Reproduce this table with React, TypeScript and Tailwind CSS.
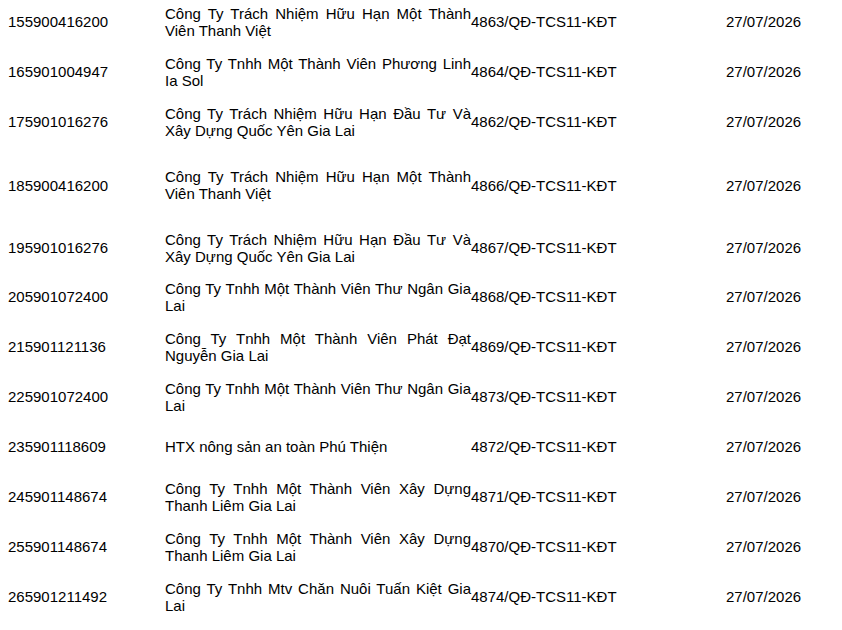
import React from "react";

type Row = { id: string; l1: string; l2?: string; code: string; h: string };

const rows: Row[] = [
  { id: "155900416200", l1: "Công Ty Trách Nhiệm Hữu Hạn Một Thành", l2: "Viên Thanh Việt", code: "4863/QĐ-TCS11-KĐT", h: "h-[50px]" },
  { id: "165901004947", l1: "Công Ty Tnhh Một Thành Viên Phương Linh", l2: "Ia Sol", code: "4864/QĐ-TCS11-KĐT", h: "h-[50px]" },
  { id: "175901016276", l1: "Công Ty Trách Nhiệm Hữu Hạn Đầu Tư Và", l2: "Xây Dựng Quốc Yên Gia Lai", code: "4862/QĐ-TCS11-KĐT", h: "h-[50px]" },
  { id: "185900416200", l1: "Công Ty Trách Nhiệm Hữu Hạn Một Thành", l2: "Viên Thanh Việt", code: "4866/QĐ-TCS11-KĐT", h: "h-[77px]" },
  { id: "195901016276", l1: "Công Ty Trách Nhiệm Hữu Hạn Đầu Tư Và", l2: "Xây Dựng Quốc Yên Gia Lai", code: "4867/QĐ-TCS11-KĐT", h: "h-[48px]" },
  { id: "205901072400", l1: "Công Ty Tnhh Một Thành Viên Thư Ngân Gia", l2: "Lai", code: "4868/QĐ-TCS11-KĐT", h: "h-[50px]" },
  { id: "215901121136", l1: "Công Ty Tnhh Một Thành Viên Phát Đạt", l2: "Nguyễn Gia Lai", code: "4869/QĐ-TCS11-KĐT", h: "h-[50px]" },
  { id: "225901072400", l1: "Công Ty Tnhh Một Thành Viên Thư Ngân Gia", l2: "Lai", code: "4873/QĐ-TCS11-KĐT", h: "h-[50px]" },
  { id: "235901118609", l1: "HTX nông sản an toàn Phú Thiện", code: "4872/QĐ-TCS11-KĐT", h: "h-[50px]" },
  { id: "245901148674", l1: "Công Ty Tnhh Một Thành Viên Xây Dựng", l2: "Thanh Liêm Gia Lai", code: "4871/QĐ-TCS11-KĐT", h: "h-[50px]" },
  { id: "255901148674", l1: "Công Ty Tnhh Một Thành Viên Xây Dựng", l2: "Thanh Liêm Gia Lai", code: "4870/QĐ-TCS11-KĐT", h: "h-[50px]" },
  { id: "265901211492", l1: "Công Ty Tnhh Mtv Chăn Nuôi Tuấn Kiệt Gia", l2: "Lai", code: "4874/QĐ-TCS11-KĐT", h: "h-[50px]" },
];

export default function App() {
  return (
    <div className="min-h-[630px] w-full overflow-hidden bg-white text-black">
      <div
        className="mt-[-3.5px] flex flex-col pl-[8px] text-[15px] leading-[17px]"
        style={{ fontFamily: '"Liberation Sans", Arial, sans-serif' }}
      >
        {rows.map((r, i) => (
          <div key={i} className={`flex items-center ${r.h}`}>
            <div className="w-[157px] shrink-0">{r.id}</div>
            <div className="w-[306px] shrink-0">
              {r.l2 ? (
                <>
                  <div className="whitespace-nowrap text-justify [text-align-last:justify]">{r.l1}</div>
                  <div className="whitespace-nowrap">{r.l2}</div>
                </>
              ) : (
                <div className="whitespace-nowrap">{r.l1}</div>
              )}
            </div>
            <div className="w-[255px] shrink-0">{r.code}</div>
            <div className="shrink-0">27/07/2026</div>
          </div>
        ))}
      </div>
    </div>
  );
}
